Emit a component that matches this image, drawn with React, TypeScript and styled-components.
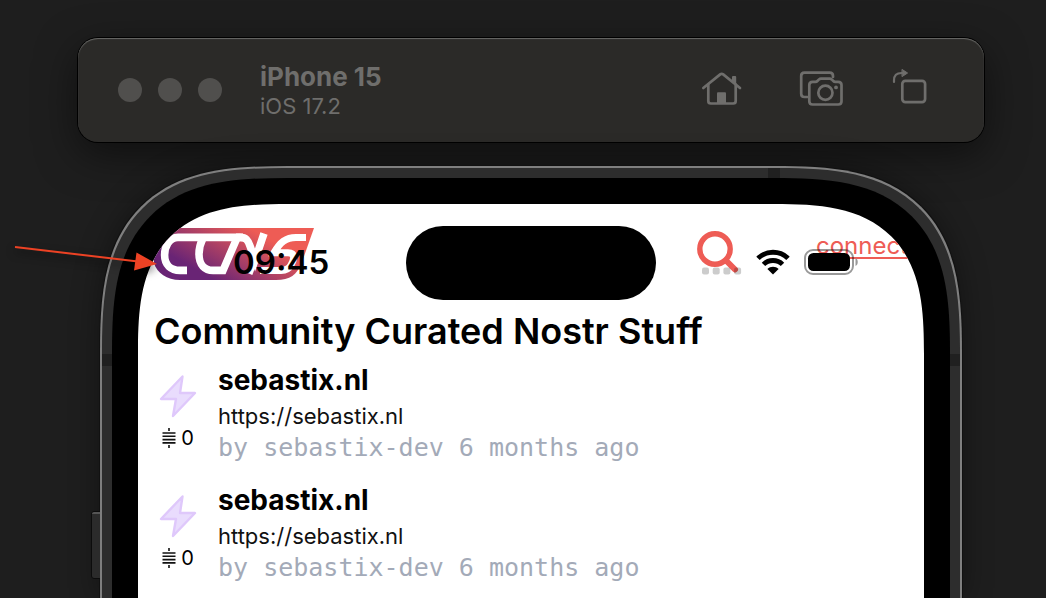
import React from "react";
import styled, { createGlobalStyle } from "styled-components";

const Global = createGlobalStyle`
  * { box-sizing: border-box; }
  body { margin: 0; background: #1e1e1e; font-family: Inter, "Liberation Sans", sans-serif; }
  h1, h2, p, ul { margin: 0; padding: 0; }
  svg { display: block; }
`;

const Desktop = styled.div`
  position: relative;
  display: flex;
  flex-direction: column;
  gap: 24px;
  height: 100vh;
  padding: 38px 62px 0 78px;
  overflow: hidden;
  background: #1e1e1e;
`;

const TitleBar = styled.header`
  display: flex;
  align-items: center;
  flex: none;
  height: 104px;
  padding: 0 46px 0 40px;
  border-radius: 20px;
  background: #2b2a28;
  box-shadow: inset 0 1px 1px #6a6a68, 0 0 0 1px #000, 0 12px 40px rgba(0, 0, 0, 0.5);
`;

const Lights = styled.div`
  display: flex;
  gap: 16px;
  margin-right: 38px;
`;

const Light = styled.button`
  width: 24px;
  height: 24px;
  padding: 0;
  border: 0;
  border-radius: 50%;
  background: #504f4d;
`;

const Device = styled.div`
  flex: 1;
  color: #6f6e6c;
`;

const DeviceName = styled.div`
  font-size: 26px;
  font-weight: 700;
  line-height: 32px;
`;

const DeviceOs = styled.div`
  font-size: 22px;
  line-height: 26px;
`;

const Tools = styled.div`
  display: flex;
  gap: 38px;
`;

const Tool = styled.button`
  padding: 0;
  border: 0;
  background: none;
  color: #6f6e6c;
`;

const Phone = styled.div`
  position: relative;
  flex: 1;
  min-height: 0;
  margin: 0 22px;
  padding: 10px 10px 0;
  border: 2px solid #7f7f7f;
  border-bottom: 0;
  border-radius: 188px 188px 0 0;
  corner-shape: superellipse(1.5) superellipse(1.5) round round;
  background: #2d2d2d;
  box-shadow: 0 0 0 1px #111, 0 0 30px rgba(0, 0, 0, 0.4);
`;

const Band = styled.span<{ $edge: "top" | "left" | "right" }>`
  position: absolute;
  background: #202020;
  ${({ $edge }) =>
    $edge === "top"
      ? "top: 0; right: 180px; width: 12px; height: 10px;"
      : `${$edge}: 0; top: 186px; width: 10px; height: 12px;`}
`;

const SideButton = styled.span`
  position: absolute;
  top: 344px;
  left: -10px;
  width: 8px;
  height: 66px;
  border-top: 2px solid #555;
  border-radius: 2px 0 0 2px;
  background: #2b2b2b;
  box-shadow: -1px 0 0 #0c0c0c, 0 1px 0 #0c0c0c, 0 -1px 0 #0c0c0c;
`;

const Bezel = styled.div`
  height: 100%;
  padding: 26px 26px 0;
  border-radius: 176px 176px 0 0;
  corner-shape: superellipse(1.5) superellipse(1.5) round round;
  background: #000;
`;

const Screen = styled.main`
  position: relative;
  height: 100%;
  padding: 24px 16px 0;
  overflow: hidden;
  border-radius: 150px 150px 0 0;
  corner-shape: superellipse(1.5) superellipse(1.5) round round;
  background: #fff;
  color: #000;
`;

const StatusBar = styled.div`
  position: absolute;
  inset: 21px 66px auto 95px;
  display: flex;
  align-items: center;
  justify-content: space-between;
  height: 74px;
`;

const Clock = styled.time`
  font-size: 33px;
  font-weight: 600;
  line-height: 40px;
`;

const Island = styled.div`
  position: absolute;
  top: 22px;
  left: 50%;
  width: 250px;
  height: 74px;
  border-radius: 37px;
  background: #000;
  transform: translateX(-50%);
`;

const Indicators = styled.div`
  display: flex;
  align-items: center;
  gap: 14px;
`;

const SiteHeader = styled.div`
  display: flex;
  align-items: flex-start;
  height: 79px;
`;

const HomeLink = styled.a`
  flex: 1;
`;

const SearchButton = styled.button`
  margin: 3px 76px 0 0;
  padding: 0;
  border: 0;
  background: none;
`;

const ConnectLink = styled.a`
  margin-top: 4px;
  color: #ee5c55;
  font-size: 24px;
  line-height: 28px;
  text-decoration: underline;
  text-decoration-thickness: 2px;
  text-underline-offset: 3px;
`;

const Title = styled.h1`
  font-size: 36px;
  font-weight: 600;
  line-height: 48px;
`;

const Feed = styled.ul`
  display: grid;
  gap: 16px;
  margin-top: 5px;
  list-style: none;
`;

const Item = styled.li`
  display: flex;
  gap: 16px;
  height: 104px;
`;

const Votes = styled.div`
  display: flex;
  flex-direction: column;
  align-items: center;
  gap: 8px;
  width: 48px;
  padding-top: 14px;
`;

const ZapButton = styled.button`
  padding: 0;
  border: 0;
  background: none;
`;

const Sats = styled.div`
  display: flex;
  align-items: center;
  gap: 5px;
  font-size: 20px;
  line-height: 24px;
`;

const Name = styled.h2`
  font-size: 28px;
  font-weight: 700;
  line-height: 40px;
`;

const Url = styled.a`
  display: block;
  color: #111;
  font-size: 22px;
  line-height: 32px;
  text-decoration: none;
`;

const Byline = styled.p`
  color: #a3aab8;
  font-family: "DejaVu Sans Mono", monospace;
  font-size: 25px;
  line-height: 32px;
  white-space: nowrap;
`;

const Pointer = styled.svg`
  position: absolute;
  top: 236px;
  left: 10px;
  filter: drop-shadow(0 4px 4px rgba(0, 0, 0, 0.6));
`;

const line = { fill: "none", stroke: "currentColor", strokeWidth: 2.7, strokeLinecap: "round", strokeLinejoin: "round" } as const;

const HomeIcon = () => (
  <svg width="56" height="48" viewBox="0 0 56 48" {...line}>
    <path d="M9.3 22 L26.2 8.4 Q27.7 7.2 29.2 8.4 L46 22" />
    <path d="M14.3 18.5 V35 Q14.3 37.5 16.8 37.5 H39.2 Q41.7 37.5 41.7 35 V18.5" />
    <path d="M38 11 Q38 10 39 10 H41.2 Q42.2 10 42.2 11 V19 L38 16 Z" fill="currentColor" stroke="none" />
    <path d="M23 37.7 V27.2 Q23 26.2 24 26.2 H31 Q32 26.2 32 27.2 V37.7 Z" fill="currentColor" stroke="none" />
  </svg>
);

const CameraIcon = () => (
  <svg width="56" height="48" viewBox="0 0 56 48" {...line}>
    <path d="M19.3 31 H16.5 Q13.2 31 13.2 27.7 V9.9 Q13.2 6.6 16.5 6.6 H41.7 Q45 6.6 45 9.9 V11" />
    <path d="M24.6 15.8 H27.4 Q28.6 15.8 29.4 15 L31 13.4 Q31.8 12.7 33 12.7 H41.7 Q42.9 12.7 43.7 13.4 L45.3 15 Q46.1 15.8 47.3 15.8 H50.2 Q53.5 15.8 53.5 19.1 V35.2 Q53.5 38.5 50.2 38.5 H24.6 Q21.3 38.5 21.3 35.2 V19.1 Q21.3 15.8 24.6 15.8 Z" />
    <circle cx="37.4" cy="26.8" r="7.1" />
    <circle cx="48" cy="21.4" r="1.9" fill="currentColor" stroke="none" />
  </svg>
);

const RotateIcon = () => (
  <svg width="56" height="48" viewBox="0 0 56 48" {...line}>
    <rect x="20.3" y="14.9" width="22.8" height="21.2" rx="3" />
    <path d="M12 16 V14.5 Q12 7 19.5 7 H21" strokeWidth="2.2" />
    <path d="M20.3 3.6 L25.6 7 L20.3 10.4 Z" fill="currentColor" strokeWidth="1" />
  </svg>
);

const LogoMark = () => (
  <svg width="160" height="52" viewBox="2 0 160 52" role="img" aria-label="CCNS">
    <defs>
      <linearGradient id="brand" x1="40" y1="60" x2="84" y2="-18" gradientUnits="userSpaceOnUse">
        <stop offset="0.2" stopColor="#692475" />
        <stop offset="0.9" stopColor="#ee5c55" />
      </linearGradient>
    </defs>
    <path fill="url(#brand)" d="M22 0 H162 L150 34 C145 47 138 52 124 52 H28 C12 52 1 42 1 28 C1 14 8 0 22 0 Z" />
    <g fill="none" stroke="#fff" strokeWidth="7.6">
      <path d="M91 9.4 H26 C17 9.4 12.6 19 12.6 27 C12.6 37 19 42.4 28 42.4 H35" />
      <path d="M51 10 C48.5 15 47 20 47 26 C47 37 53 42.4 61 42.4 H71 L85 10" />
      <path d="M84 9.4 H88 C94 9.4 96 12 98 18 L103 32 L112 5.6" />
      <path d="M98 46 L110 14" strokeWidth="5" />
      <path d="M154 9.4 H144 C134 9.4 128 14 122 24.8 H136 C144 24.8 142 32 139 37 C137 41 134 42.4 129 42.4 H108" strokeWidth="7" />
    </g>
  </svg>
);

const WifiIcon = () => (
  <svg width="34" height="26" viewBox="0 0 34 26">
    <g fill="none" stroke="#000" strokeWidth="4.8">
      <path d="M2 9.4 C10 1.2 24 1.2 32 9.4" />
      <path d="M7.5 15.4 C12.6 10.2 21.4 10.2 26.5 15.4" />
    </g>
    <path d="M17 25.5 L11.4 19.9 C14.4 17.1 19.6 17.1 22.6 19.9 Z" />
  </svg>
);

const BatteryIcon = () => (
  <svg width="54" height="26" viewBox="0 0 54 26">
    <rect x="1" y="1" width="48" height="24" rx="8" fill="none" stroke="#000" strokeOpacity="0.4" strokeWidth="2" />
    <rect x="4" y="4" width="42" height="18" rx="5.5" />
    <path d="M51.5 9 C54.5 10.2 54.5 15.8 51.5 17 Z" fill="#999" />
  </svg>
);

const CellularIcon = () => (
  <svg width="40" height="26" viewBox="0 0 40 26" fill="#000" fillOpacity="0.2">
    {[0, 10.7, 21.4, 32.1].map((x) => (
      <rect key={x} x={x} y="18.5" width="7" height="7" rx="2" />
    ))}
  </svg>
);

const SearchIcon = () => (
  <svg width="44" height="42" viewBox="0 0 44 42" fill="none" stroke="#ee5c55">
    <circle cx="19" cy="18" r="15.2" strokeWidth="5.4" />
    <path d="M30 29.5 L39 38.5" strokeWidth="6" strokeLinecap="round" />
  </svg>
);

const BoltIcon = () => (
  <svg width="38" height="44" viewBox="0 0 38 44">
    <path d="M23.5 2.5 L2 25 H17 L14 42 L36 19 H21 Z" fill="#e9dcfd" stroke="#dfc8fb" strokeWidth="2.4" strokeLinejoin="round" />
  </svg>
);

const SatIcon = () => (
  <svg width="14" height="20" viewBox="0 0 14 20" fill="none" stroke="#111" strokeWidth="1.6">
    <path d="M7 0 V3 M7 17 V20 M0.5 5 H13.5 M0.5 8.3 H13.5 M0.5 11.6 H13.5 M0.5 14.9 H13.5" />
  </svg>
);

const posts = [
  { id: 1, name: "sebastix.nl", url: "https://sebastix.nl", by: "by sebastix-dev 6 months ago", sats: 0 },
  { id: 2, name: "sebastix.nl", url: "https://sebastix.nl", by: "by sebastix-dev 6 months ago", sats: 0 },
];

export default function App() {
  return (
    <Desktop>
      <Global />
      <TitleBar>
        <Lights>
          <Light aria-label="Close" />
          <Light aria-label="Minimize" />
          <Light aria-label="Zoom" />
        </Lights>
        <Device>
          <DeviceName>iPhone 15</DeviceName>
          <DeviceOs>iOS 17.2</DeviceOs>
        </Device>
        <Tools>
          <Tool aria-label="Home"><HomeIcon /></Tool>
          <Tool aria-label="Screenshot"><CameraIcon /></Tool>
          <Tool aria-label="Rotate"><RotateIcon /></Tool>
        </Tools>
      </TitleBar>
      <Phone>
        <Band $edge="top" />
        <Band $edge="left" />
        <Band $edge="right" />
        <SideButton />
        <Bezel>
          <Screen>
            <SiteHeader>
              <HomeLink href="#"><LogoMark /></HomeLink>
              <SearchButton aria-label="Search"><SearchIcon /></SearchButton>
              <ConnectLink href="#connect">connect</ConnectLink>
            </SiteHeader>
            <Title>Community Curated Nostr Stuff</Title>
            <Feed>
              {posts.map((post) => (
                <Item key={post.id}>
                  <Votes>
                    <ZapButton aria-label="Zap"><BoltIcon /></ZapButton>
                    <Sats><SatIcon />{post.sats}</Sats>
                  </Votes>
                  <div>
                    <Name>{post.name}</Name>
                    <Url href={post.url}>{post.url}</Url>
                    <Byline>{post.by}</Byline>
                  </div>
                </Item>
              ))}
            </Feed>
            <StatusBar>
              <Clock>09:45</Clock>
              <Indicators>
                <CellularIcon />
                <WifiIcon />
                <BatteryIcon />
              </Indicators>
            </StatusBar>
            <Island />
          </Screen>
        </Bezel>
      </Phone>
      <Pointer width="160" height="44" viewBox="10 236 160 44" aria-hidden="true">
        <path d="M15 247 L138 261.6" stroke="#ed4224" strokeWidth="2" />
        <path d="M136.5 252.5 L157 264 L134 270.5 Z" fill="#ed4224" />
      </Pointer>
    </Desktop>
  );
}
